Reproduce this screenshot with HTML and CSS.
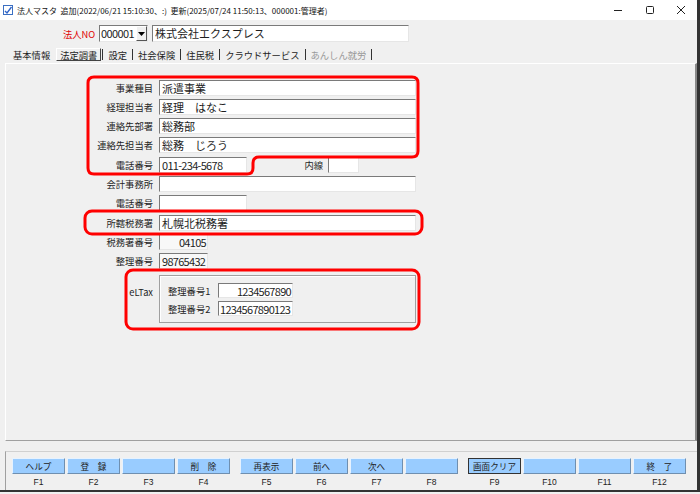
FILE: index.html
```html
<!DOCTYPE html>
<html lang="ja">

<head>
  <meta charset="UTF-8">
  <title>法人マスタ</title>
  <link rel="stylesheet" href="styles.css">
</head>

<body>
  <div class="window">
    <div class="titlebar">
      <svg class="app-icon" viewBox="0 0 10 10">
        <rect x="0.5" y="0.5" width="9" height="9" fill="#fff" stroke="#3b6fc2" />
        <path d="M2 6 L4 8 L8.5 2" fill="none" stroke="#2f64c8" stroke-width="1.4" />
      </svg>
      <span class="title">法人マスタ&nbsp;&nbsp;追加(2022/06/21 15:10:30、:)&nbsp;&nbsp;更新(2025/07/24 11:50:13、000001:管理者)</span>
      <div class="controls">
        <span class="ctl"><svg width="10" height="10" viewBox="0 0 10 10"><path d="M1 5.5 H9" stroke="#222" stroke-width="1" /></svg></span>
        <span class="ctl"><svg width="10" height="10" viewBox="0 0 10 10"><rect x="1.5" y="1.5" width="7" height="7" rx="1" fill="none" stroke="#222" /></svg></span>
        <span class="ctl"><svg width="10" height="10" viewBox="0 0 10 10"><path d="M1 1 L9 9 M9 1 L1 9" stroke="#222" stroke-width="1" /></svg></span>
      </div>
    </div>

    <div class="head">
      <span class="no-label">法人NO</span>
      <div class="combo"><span class="combo-val">000001</span><span class="drop"><svg width="7" height="4" viewBox="0 0 7 4"><path d="M0 0 H7 L3.5 4 Z" fill="#000" /></svg></span></div>
      <div class="fld name">株式会社エクスプレス</div>
    </div>

    <div class="tabs">
      <span class="tab">基本情報</span>
      <span class="tab on">法定調書</span>
      <span class="bar first"></span>
      <span class="tab">設定</span>
      <span class="bar"></span>
      <span class="tab">社会保険</span>
      <span class="bar"></span>
      <span class="tab">住民税</span>
      <span class="bar"></span>
      <span class="tab">クラウドサービス</span>
      <span class="bar"></span>
      <span class="tab off">あんしん就労</span>
      <span class="bar"></span>
    </div>

    <div class="panel">
      <div class="form">
        <div class="row"><span class="lbl">事業種目</span><div class="fld wide">派遣事業</div></div>
        <div class="row"><span class="lbl">経理担当者</span><div class="fld wide">経理　はなこ</div></div>
        <div class="row"><span class="lbl">連絡先部署</span><div class="fld wide">総務部</div></div>
        <div class="row"><span class="lbl">連絡先担当者</span><div class="fld wide">総務　じろう</div></div>
        <div class="row">
          <span class="lbl">電話番号</span><div class="fld tel num">011-234-5678</div>
          <span class="lbl ext">内線</span><div class="fld extno"></div>
        </div>
        <div class="row"><span class="lbl">会計事務所</span><div class="fld wide"></div></div>
        <div class="row"><span class="lbl">電話番号</span><div class="fld tel"></div></div>
        <div class="row"><span class="lbl">所轄税務署</span><div class="fld wide">札幌北税務署</div></div>
        <div class="row"><span class="lbl">税務署番号</span><div class="fld short ro num right">04105</div></div>
        <div class="row"><span class="lbl">整理番号</span><div class="fld short ro num">98765432</div></div>
      </div>

      <div class="eltax">
        <span class="lbl eltax-lbl">eLTax</span>
        <div class="group">
          <div class="grow"><span class="glbl">整理番号1</span><div class="fld gfld num right">1234567890</div></div>
          <div class="grow"><span class="glbl">整理番号2</span><div class="fld gfld num">1234567890123</div></div>
        </div>
      </div>
    </div>

    <div class="fkeys">
      <div class="fgroup">
        <div class="key"><div class="btn">ヘルプ</div><span class="fno">F1</span></div>
        <div class="key"><div class="btn">登　録</div><span class="fno">F2</span></div>
        <div class="key"><div class="btn"></div><span class="fno">F3</span></div>
        <div class="key"><div class="btn">削　除</div><span class="fno">F4</span></div>
      </div>
      <div class="fgroup">
        <div class="key"><div class="btn">再表示</div><span class="fno">F5</span></div>
        <div class="key"><div class="btn">前へ</div><span class="fno">F6</span></div>
        <div class="key"><div class="btn">次へ</div><span class="fno">F7</span></div>
        <div class="key"><div class="btn"></div><span class="fno">F8</span></div>
      </div>
      <div class="fgroup">
        <div class="key"><div class="btn focus">画面クリア</div><span class="fno">F9</span></div>
        <div class="key"><div class="btn"></div><span class="fno">F10</span></div>
        <div class="key"><div class="btn"></div><span class="fno">F11</span></div>
        <div class="key"><div class="btn">終　了</div><span class="fno">F12</span></div>
      </div>
    </div>

    <!-- red marks drawn over the form -->
    <svg class="marks" width="700" height="494" viewBox="0 0 700 494">
      <path d="M94 77 H412 Q418 77 418 83 V151 Q418 157 412 157 H259 Q253 157 253 163 V168 Q253 174 247 174 H94 Q88 174 88 168 V83 Q88 77 94 77 Z" />
      <rect x="85" y="211" width="337" height="23" rx="7" />
      <rect x="126" y="270" width="293" height="59" rx="7" />
    </svg>
  </div>
</body>

</html>
```

FILE: styles.css
```css
* {
  box-sizing: border-box;
}

body {
  margin: 0;
  background: #f0f0f0;
  font-family: "Noto Sans CJK JP", "Liberation Sans", sans-serif;
  color: #1e1e1e;
}

.window {
  position: relative;
  width: 700px;
  height: 492px;
  background: #f0f0f0;
  border-right: 3px solid #333;
  border-bottom: 2px solid #333;
  display: flex;
  flex-direction: column;
  overflow: hidden;
}

.titlebar {
  height: 20px;
  background: #fff;
  display: flex;
  align-items: center;
  padding-left: 3px;
  font-size: 8px;
  color: #111;
}

.app-icon {
  width: 10px;
  height: 10px;
  margin-right: 4px;
}

.controls {
  margin-left: auto;
  display: flex;
}

.ctl {
  width: 31.5px;
  height: 20px;
  display: flex;
  align-items: center;
  justify-content: center;
}

/* header */
.head {
  height: 27px;
  display: flex;
  align-items: center;
  padding-left: 63px;
  padding-top: 1px;
}

.no-label {
  color: #e00000;
  font-size: 9.3px;
  width: 36px;
}

.combo {
  width: 49px;
  height: 17px;
  display: flex;
  background: #fff;
  border: 1px solid;
  border-color: #7a7a7a #e8e8e8 #e8e8e8 #7a7a7a;
}

.combo-val {
  flex: 1;
  font-size: 11px;
  line-height: 15px;
  padding-left: 1px;
  letter-spacing: -0.6px;
}

.drop {
  width: 11px;
  background: #f0f0f0;
  border: 1px solid;
  border-color: #fff #555 #555 #fff;
  display: flex;
  align-items: center;
  justify-content: center;
}

.head .name {
  width: 257px;
  height: 17px;
  margin-left: 4px;
}

/* tabs */
.tabs {
  height: 16px;
  display: flex;
  align-items: center;
  padding-left: 13px;
  font-size: 9.3px;
}

.tab {
  line-height: 12px;
}

.tab.on {
  margin-left: 6px;
  padding: 0 3px;
  height: 13px;
  border: 1px solid;
  border-color: #fff #444 #444 #fff;
}

.tab.off {
  color: #999;
}

.bar {
  width: 1px;
  height: 11px;
  background: #333;
  margin: 0 5px;
}

.bar.first {
  margin-left: 1px;
}

/* main panel */
.panel {
  margin-left: 5px;
  width: 692px;
  height: 379px;
  border-top: 1px solid #fff;
  border-left: 1px solid #fff;
  border-right: 2px solid #8a8a8a;
  border-bottom: 1px solid #a0a0a0;
  padding-top: 14px;
}

.row {
  height: 19.3px;
  display: flex;
  align-items: center;
}

.lbl {
  width: 147px;
  text-align: right;
  font-size: 9.3px;
  margin-right: 6px;
}

.fld {
  height: 16px;
  background: #fff;
  border: 1px solid;
  border-color: #7a7a7a #e6e6e6 #e6e6e6 #7a7a7a;
  font-size: 11px;
  line-height: 14px;
  padding-left: 2px;
  white-space: nowrap;
  overflow: hidden;
}

.num {
  letter-spacing: -0.7px;
}

.right {
  text-align: right;
  padding-right: 1px;
}

.wide {
  width: 257px;
}

.tel {
  width: 88px;
}

.lbl.ext {
  width: 76px;
  margin-right: 5px;
}

.extno {
  width: 31px;
}

.short {
  width: 49px;
}

.ro {
  background: #f8f8f8;
}

/* eLTax group */
.eltax {
  display: flex;
  margin-top: 4px;
}

.eltax-lbl {
  margin-top: 10px;
}

.group {
  width: 257px;
  height: 48px;
  border: 1px solid #a0a0a0;
  box-shadow: inset 1px 1px 0 #fff;
  padding: 6px 0 0 8px;
}

.grow {
  height: 18px;
  display: flex;
  align-items: center;
}

.glbl {
  width: 50px;
  font-size: 9.3px;
}

.gfld {
  width: 75px;
  height: 15px;
  padding-left: 1px;
}

/* function keys */
.fkeys {
  margin: 10px 0 0 5px;
  width: 692px;
  height: 39px;
  border-top: 1px solid #d0d0d0;
  border-left: 1px solid #a0a0a0;
  display: flex;
  gap: 10px;
  padding: 6px 0 0 6px;
}

.fgroup {
  display: flex;
  gap: 2px;
}

.key {
  width: 53px;
  display: flex;
  flex-direction: column;
  align-items: center;
}

.btn {
  width: 100%;
  height: 16px;
  background: #99ccff;
  border: 1px solid;
  border-color: #e6f2ff #6f8fb0 #6f8fb0 #e6f2ff;
  font-size: 8.6px;
  line-height: 14px;
  text-align: center;
  color: #222;
}

.btn.focus {
  border-color: #333;
}

.fno {
  font-family: "Liberation Sans", sans-serif;
  font-size: 8.5px;
  line-height: 10px;
  margin-top: 3px;
  color: #222;
}

.marks {
  position: absolute;
  top: 0;
  left: 0;
  pointer-events: none;
}

.marks path,
.marks rect {
  fill: none;
  stroke: #f00;
  stroke-width: 3;
}
```
